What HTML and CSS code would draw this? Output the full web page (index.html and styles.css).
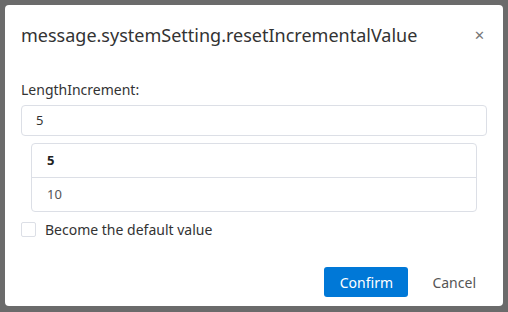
FILE: index.html
```html
<!DOCTYPE html>
<html lang="en">
<head>
<meta charset="UTF-8" />
<title>reset</title>
<link rel="stylesheet" href="styles.css">
</head>
<body>
<div class="dialog">
    <div class="dialog-header">
        <span class="dialog-title">message.systemSetting.resetIncrementalValue</span>
        <span class="dialog-close">&#x2715;</span>
    </div>
    <div class="dialog-body">
        <div class="field-label">LengthIncrement:</div>
        <div class="input">5</div>
        <ul class="options">
            <li class="option selected">5</li>
            <li class="option">10</li>
        </ul>
        <label class="check">
            <span class="check-box"></span>
            <span>Become the default value</span>
        </label>
    </div>
    <div class="dialog-footer">
        <button class="btn primary">Confirm</button>
        <button class="btn text">Cancel</button>
    </div>
</div>
</body>
</html>
```

FILE: styles.css
```css
html, body {
    margin: 0;
    height: 100%;
}
body {
    background: #6b6b6b;
    padding: 5px;
    box-sizing: border-box;
    font-family: 'Noto Sans', sans-serif;
    color: #333;
}
.dialog {
    width: 498px;
    height: 301px;
    background: #fff;
    border-radius: 4px;
    box-sizing: border-box;
    display: flex;
    flex-direction: column;
}
.dialog-header {
    display: flex;
    justify-content: space-between;
    align-items: center;
    padding: 18px 16px 0 16px;
    height: 24px;
}
.dialog-title {
    font-size: 18px;
    color: #333;
}
.dialog-close {
    font-size: 13px;
    color: #777;
    margin-right: 2px;
}
.dialog-body {
    padding: 33px 16px 0 16px;
}
.field-label {
    font-size: 14px;
    line-height: 20px;
    margin-bottom: 5px;
}
.input {
    height: 31px;
    box-sizing: border-box;
    border: 1px solid #dcdfe6;
    border-radius: 4px;
    padding: 0 14px;
    font-size: 13px;
    line-height: 29px;
}
.options {
    list-style: none;
    margin: 7px 10px 0 10px;
    padding: 0;
    border: 1px solid #dcdfe6;
    border-radius: 4px;
}
.option {
    height: 33px;
    line-height: 33px;
    padding: 0 15px;
    font-size: 13px;
    color: #555;
}
.option + .option {
    border-top: 1px solid #dcdfe6;
}
.option.selected {
    font-weight: bold;
    color: #222;
}
.check {
    display: flex;
    align-items: center;
    gap: 9px;
    margin-top: 8px;
    font-size: 14px;
}
.check-box {
    width: 13px;
    height: 13px;
    border: 1px solid #dcdfe6;
    border-radius: 2px;
}
.dialog-footer {
    margin-top: auto;
    display: flex;
    justify-content: flex-end;
    align-items: center;
    gap: 13px;
    padding: 0 16px 9px 0;
}
.btn {
    font-family: inherit;
    font-size: 14px;
    height: 30px;
    border: none;
    border-radius: 3px;
    cursor: pointer;
}
.btn.primary {
    width: 84px;
    background: #0078d7;
    color: #fff;
}
.btn.text {
    background: none;
    color: #555;
    padding: 0 11px;
}
```
